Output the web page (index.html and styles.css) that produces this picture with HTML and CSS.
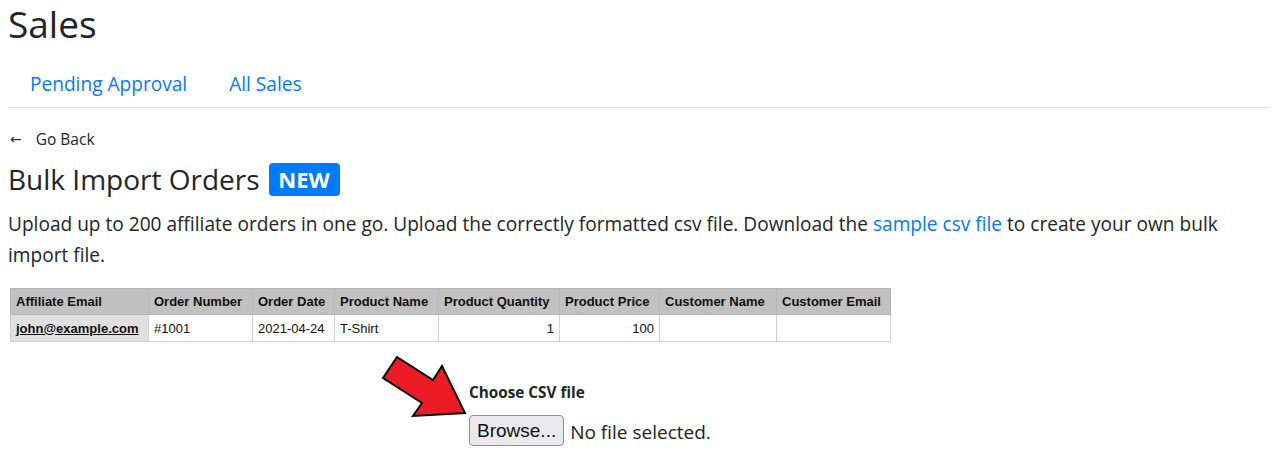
FILE: index.html
```html
<!DOCTYPE html>
<html lang="en">
<head>
<meta charset="utf-8">
<title>Sales</title>
<link rel="stylesheet" href="styles.css">
</head>
<body>
<div class="page">
  <h1 class="title">Sales</h1>
  <nav class="tabs">
    <a class="tab" href="#">Pending Approval</a>
    <a class="tab" href="#">All Sales</a>
  </nav>

  <a class="back" href="#"><span class="back-arrow">&larr;</span>Go Back</a>
  <h2 class="subtitle">Bulk Import Orders <span class="badge">NEW</span></h2>
  <p class="intro">Upload up to 200 affiliate orders in one go. Upload the correctly formatted csv file. Download the <a href="#">sample csv file</a> to create your own bulk import file.</p>

  <table class="sheet">
    <thead>
      <tr>
        <th class="c1">Affiliate Email</th>
        <th class="c2">Order Number</th>
        <th class="c3">Order Date</th>
        <th class="c4">Product Name</th>
        <th class="c5">Product Quantity</th>
        <th class="c6">Product Price</th>
        <th class="c7">Customer Name</th>
        <th class="c8">Customer Email</th>
      </tr>
    </thead>
    <tbody>
      <tr>
        <td class="email"><u>john@example.com</u></td>
        <td>#1001</td>
        <td>2021-04-24</td>
        <td>T-Shirt</td>
        <td class="num">1</td>
        <td class="num">100</td>
        <td></td>
        <td></td>
      </tr>
    </tbody>
  </table>

  <div class="upload">
    <svg class="pointer" width="90" height="66" viewBox="380 354 90 66" aria-hidden="true">
      <polygon points="397,357 433,380 442,366 465,413 413,416 422,403 383,378" fill="#ed1c24" stroke="#000" stroke-width="2" stroke-linejoin="miter"/>
    </svg>
    <label class="upload-label">Choose CSV file</label>
    <div class="file-row">
      <button class="browse" type="button">Browse...</button>
      <span class="file-status">No file selected.</span>
    </div>
  </div>
</div>
</body>
</html>
```

FILE: styles.css
```css
html, body {
  margin: 0;
  padding: 0;
  background: #fff;
}
body {
  font-family: "Open Sans", "Noto Sans", sans-serif;
  color: #212529;
}
.page {
  padding: 0 8px;
}
a {
  color: #007bff;
  text-decoration: none;
}
.title {
  margin: 0 0 13px 0;
  font-size: 37px;
  font-weight: 400;
  line-height: 48px;
}
.tabs {
  display: flex;
  border-bottom: 1px solid #dee2e6;
  padding: 0 0 0 6px;
}
.tab {
  font-size: 19.1px;
  line-height: 30px;
  padding: 8px 16px;
  margin-right: 10px;
}
.back {
  display: flex;
  align-items: center;
  margin-top: 19px;
  font-size: 15.5px;
  line-height: 24px;
  color: #212529;
  padding-left: 2px;
}
.back-arrow {
  font-family: "DejaVu Sans", sans-serif;
  font-size: 14px;
  margin-right: 14px;
  color: #333;
}
.subtitle {
  margin: 9px 0 0 0;
  font-size: 28px;
  font-weight: 400;
  line-height: 38px;
  display: flex;
  align-items: center;
}
.badge {
  display: inline-flex;
  align-items: center;
  justify-content: center;
  margin-left: 9px;
  width: 71px;
  height: 33px;
  box-sizing: border-box;
  background: #007bff;
  color: #fff;
  font-size: 22px;
  font-weight: 700;
  border-radius: 4px;
  line-height: 1;
}
.intro {
  margin: 11px 0 0 0;
  font-size: 19.1px;
  line-height: 31px;
  max-width: 1225px;
}
.sheet {
  margin-top: 17px;
  border-collapse: collapse;
  font-family: "Liberation Sans", Arial, sans-serif;
  font-size: 13px;
  color: #111;
  margin-left: 2px;
}
.sheet th, .sheet td {
  border: 1px solid #d2d2d2;
  padding: 0 5px;
  text-align: left;
  white-space: nowrap;
}
.sheet th {
  background: #c0c1c0;
  font-weight: 700;
  height: 25px;
  border-color: #b7b7b7;
}
.sheet td {
  height: 26px;
}
.sheet td.email {
  background: #e0e0e0;
  font-weight: 700;
}
.sheet td.num {
  text-align: right;
}
.c1 { width: 127px; }
.c2 { width: 93px; }
.c3 { width: 71px; }
.c4 { width: 93px; }
.c5 { width: 110px; }
.c6 { width: 89px; }
.c7 { width: 106px; }
.c8 { width: 103px; }

.upload {
  position: relative;
  margin-top: 40px;
  padding-left: 461px;
}
.pointer {
  position: absolute;
  left: 372px;
  top: -28px;
}
.upload-label {
  display: block;
  font-size: 15.3px;
  font-weight: 700;
  line-height: 20px;
  margin-bottom: 13px;
}
.file-row {
  display: flex;
  align-items: center;
}
.browse {
  font-family: "Liberation Sans", Arial, sans-serif;
  font-size: 19px;
  color: #111;
  height: 31px;
  padding: 1px 7px 0;
  background: #e9e9ed;
  border: 1px solid #8f8f9d;
  border-radius: 4px;
  margin-right: 6px;
}
.file-status {
  font-size: 19px;
  color: #222;
  padding-top: 2px;
}
```
